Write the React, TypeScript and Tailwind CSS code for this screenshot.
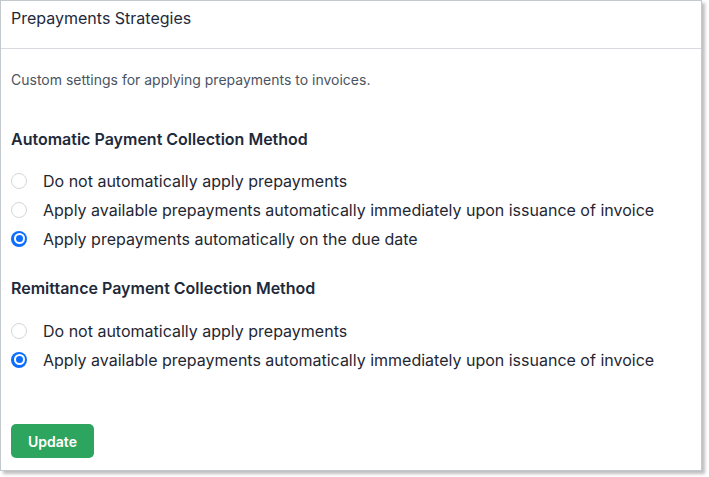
import React from 'react';

interface OptionProps {
  label: string;
  checked?: boolean;
}

const RadioOption: React.FC<OptionProps> = ({ label, checked }) => (
  <label className="flex items-center h-[29px] cursor-pointer">
    {checked ? (
      <span className="w-[16px] h-[16px] rounded-full bg-[#0d6efd] flex items-center justify-center flex-shrink-0">
        <span className="w-[11px] h-[11px] rounded-full bg-white flex items-center justify-center">
          <span className="w-[7px] h-[7px] rounded-full bg-[#0d6efd]"></span>
        </span>
      </span>
    ) : (
      <span className="w-[16px] h-[16px] rounded-full border border-[#d3d6da] bg-white flex-shrink-0"></span>
    )}
    <span className="ml-[16px] text-[16px] leading-5 text-[#1f2733]">{label}</span>
  </label>
);

export default function App() {
  return (
    <div className="w-[709px] h-[477px] bg-white" style={{ fontFamily: 'Inter, "Noto Sans", sans-serif' }}>
      <div className="w-[702px] h-[471px] border border-[#c3c8cc] bg-white shadow-[3px_3px_3px_rgba(0,0,0,0.25)] flex flex-col">
        <div className="h-[48px] border-b border-[#d7dbdf] px-[10px] pt-[7px]">
          <h2 className="text-[16px] leading-5 text-[#1e2a3b]">Prepayments Strategies</h2>
        </div>
        <div className="px-[10px]">
          <p className="mt-[21px] text-[14px] leading-5 text-[#4a5462]">Custom settings for applying prepayments to invoices.</p>

          <h3 className="mt-[39px] text-[16px] leading-5 font-semibold text-[#1e2a3b]">Automatic Payment Collection Method</h3>
          <div className="mt-[17px] flex flex-col">
            <RadioOption label="Do not automatically apply prepayments" />
            <RadioOption label="Apply available prepayments automatically immediately upon issuance of invoice" />
            <RadioOption label="Apply prepayments automatically on the due date" checked />
          </div>

          <h3 className="mt-[25px] text-[16px] leading-5 font-semibold text-[#1e2a3b]">Remittance Payment Collection Method</h3>
          <div className="mt-[18px] flex flex-col">
            <RadioOption label="Do not automatically apply prepayments" />
            <RadioOption label="Apply available prepayments automatically immediately upon issuance of invoice" checked />
          </div>

          <button className="mt-[50px] w-[83px] h-[34px] rounded-[5px] bg-[#2ea55f] text-white text-[14px] font-semibold">
            Update
          </button>
        </div>
      </div>
    </div>
  );
}
